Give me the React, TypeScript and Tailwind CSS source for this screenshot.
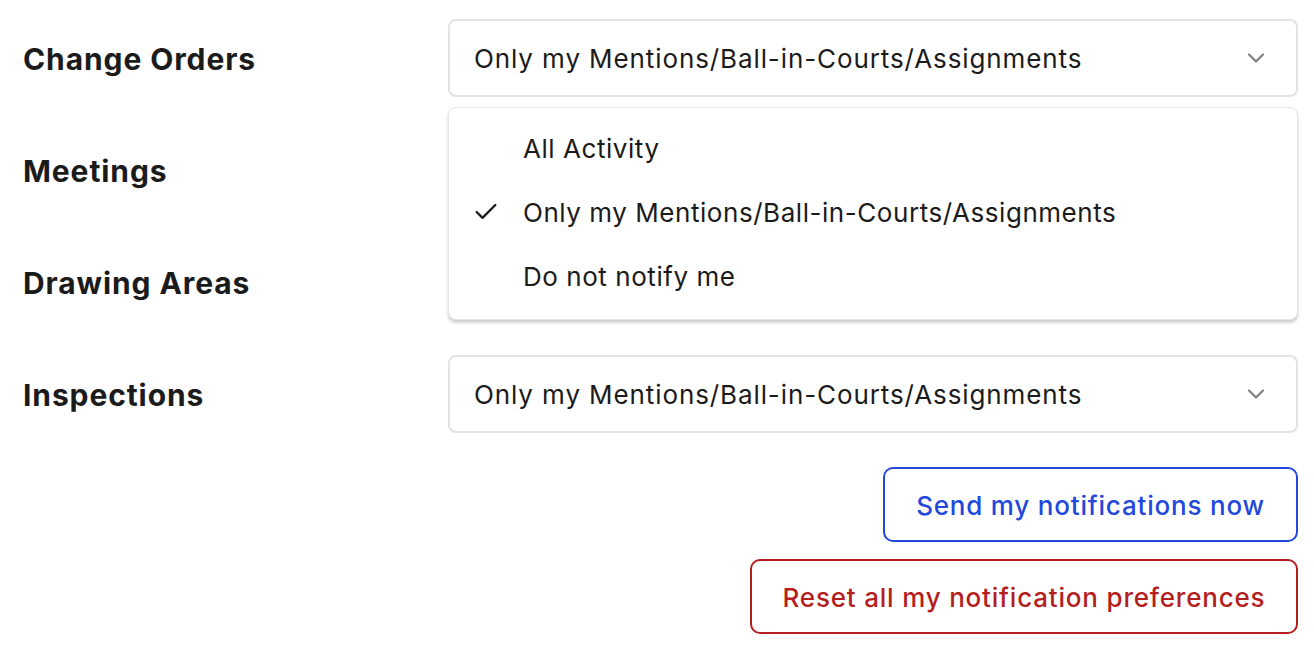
import { Check, ChevronDown } from "lucide-react";

const rows = ["Change Orders", "Meetings", "Drawing Areas", "Inspections"];
const options = [
  "All Activity",
  "Only my Mentions/Ball-in-Courts/Assignments",
  "Do not notify me",
];

function Select({ value }: { value: string }) {
  return (
    <div className="flex h-[78px] w-[850px] items-center justify-between rounded-[8px] border-2 border-[#e2e2e2] bg-white pl-[24px] pr-[26px]">
      <span className="text-[26px] tracking-[0.9px] text-[#1b1b1b]">{value}</span>
      <ChevronDown className="h-[28px] w-[28px] text-[#7a7a7a]" strokeWidth={1.8} />
    </div>
  );
}

export default function App() {
  return (
    <div
      className="relative h-[656px] w-[1314px] overflow-hidden bg-white"
      style={{ fontFamily: "Inter, 'Noto Sans', sans-serif" }}
    >
      <div className="flex flex-col gap-[34px] pl-[23px] pr-[16px] pt-[19px]">
        {rows.map((label) => (
          <div key={label} className="flex h-[78px] items-center justify-between">
            <span className="pt-[2px] text-[30px] font-bold tracking-[0.9px] text-[#1b1b1b]">{label}</span>
            {label === "Change Orders" || label === "Inspections" ? (
              <Select value="Only my Mentions/Ball-in-Courts/Assignments" />
            ) : (
              <div className="w-[850px]" />
            )}
          </div>
        ))}
        <div className="flex flex-col items-end gap-[17px]">
          <button className="h-[75px] w-[415px] rounded-[10px] border-2 border-[#2348dc] pt-[2px] text-[26px] font-medium tracking-[0.8px] text-[#2348dc]">
            Send my notifications now
          </button>
          <button className="h-[75px] w-[548px] rounded-[10px] border-2 border-[#b51e1e] pt-[2px] text-[26px] font-medium tracking-[0.8px] text-[#b51e1e]">
            Reset all my notification preferences
          </button>
        </div>
      </div>

      {/* open dropdown menu */}
      <div className="absolute left-[448px] top-[107px] flex h-[213px] w-[850px] flex-col rounded-[8px] border border-[#e4e4e4] bg-white py-[8px] shadow-[0_3px_3px_rgba(0,0,0,0.18)]">
        {options.map((opt, i) => (
          <div key={opt} className="flex h-[64px] items-center">
            <div className="flex w-[74px] justify-end pr-[23px]">
              {i === 1 && <Check className="h-[28px] w-[28px] text-[#1b1b1b]" strokeWidth={2} />}
            </div>
            <span className="text-[26px] tracking-[0.55px] text-[#1b1b1b]">{opt}</span>
          </div>
        ))}
      </div>
    </div>
  );
}
